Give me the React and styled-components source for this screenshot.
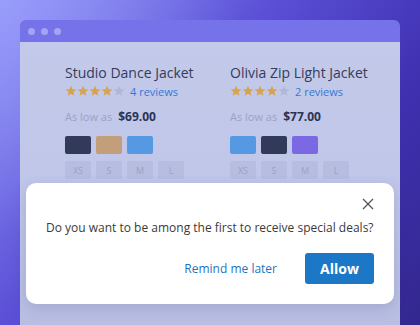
import React from 'react';
import styled, { createGlobalStyle } from 'styled-components';

const GlobalStyle = createGlobalStyle`
  html, body {
    margin: 0;
    padding: 0;
  }
  body {
    font-family: "Open Sans", "Liberation Sans", sans-serif;
  }
`;

const Stage = styled.div`
  position: relative;
  width: 420px;
  height: 325px;
  overflow: hidden;
  padding: 20px 20px 0;
  box-sizing: border-box;
  background:
    radial-gradient(circle at 0 0, rgba(160, 165, 255, 0.55), rgba(160, 165, 255, 0) 45%),
    linear-gradient(130deg, #8f92f6 0%, #5a4fd6 40%, #3f30b0 70%, #33278f 100%);
`;

const BrowserWindow = styled.div`
  height: 305px;
  border-radius: 6px 6px 0 0;
  overflow: hidden;
  display: flex;
  flex-direction: column;
`;

const TitleBar = styled.div`
  height: 22px;
  background: #7672e9;
  display: flex;
  align-items: center;
  gap: 6px;
  padding-left: 8px;
`;

const Dot = styled.span`
  width: 7px;
  height: 7px;
  border-radius: 50%;
  background: #a4a4f3;
`;

const Content = styled.div`
  flex: 1;
  background: linear-gradient(180deg, #c2c9e9 0%, #bfc6e8 60%, #b7bee2 100%);
  padding: 21px 0 0 45px;
  display: grid;
  grid-template-columns: 165px 165px;
  align-content: start;
`;

const Product = styled.div`
  display: flex;
  flex-direction: column;
`;

const Name = styled.div`
  font-size: 14px;
  line-height: 20px;
  color: #353b5c;
  white-space: nowrap;
`;

const RatingRow = styled.div`
  display: flex;
  align-items: center;
  height: 16px;
`;

const StarIcon = ({ on }) => (
  <svg width="12" height="12" viewBox="0 0 24 24">
    <path
      d="M12 1.5l3.1 7.1 7.6.6-5.8 5 1.8 7.5L12 17.7l-6.7 4 1.8-7.5-5.8-5 7.6-.6z"
      fill={on ? '#d9a24c' : '#b1b7d5'}
    />
  </svg>
);

const Reviews = styled.span`
  margin-left: 5px;
  font-size: 11px;
  color: #3479d6;
`;

const PriceRow = styled.div`
  display: flex;
  align-items: baseline;
  gap: 6px;
  margin-top: 9px;
  font-size: 11px;
  color: #9ca2c4;
`;

const Price = styled.span`
  font-weight: 700;
  font-size: 12px;
  color: #2d3352;
`;

const BoxRow = styled.div`
  display: flex;
  gap: 5px;
  margin-top: ${p => p.$top}px;
`;

const Swatch = styled.span`
  width: 26px;
  height: 18px;
  border-radius: 2px;
  background: ${p => p.$color};
`;

const Size = styled.span`
  width: 26px;
  height: 18px;
  border-radius: 2px;
  background: #b6bde0;
  color: #9ca2c4;
  font-size: 9px;
  display: flex;
  align-items: center;
  justify-content: center;
`;

const Prompt = styled.div`
  position: absolute;
  left: 26px;
  top: 183px;
  width: 368px;
  height: 121px;
  box-sizing: border-box;
  background: #fff;
  border-radius: 10px;
  box-shadow: 0 4px 14px rgba(60, 60, 120, 0.18);
  padding: 12px 20px 0 20px;
  display: flex;
  flex-direction: column;
`;

const CloseRow = styled.div`
  display: flex;
  justify-content: flex-end;
  height: 18px;
  align-items: center;
`;

const CloseButton = styled.button`
  border: none;
  background: none;
  padding: 0;
  width: 16px;
  height: 16px;
  margin-right: -2px;
  display: flex;
  align-items: center;
  justify-content: center;
`;

const Question = styled.p`
  margin: 6px 0 0;
  font-size: 12px;
  line-height: 18px;
  color: #3a3a3a;
  white-space: nowrap;
`;

const Actions = styled.div`
  display: flex;
  justify-content: flex-end;
  align-items: center;
  gap: 28px;
  margin-top: 16px;
`;

const LinkButton = styled.button`
  border: none;
  background: none;
  padding: 0;
  font-family: inherit;
  font-size: 12px;
  color: #1e74be;
`;

const PrimaryButton = styled.button`
  border: none;
  width: 69px;
  height: 31px;
  border-radius: 3px;
  background: #1c78c6;
  color: #fff;
  font-family: inherit;
  font-weight: 700;
  font-size: 14px;
`;

const products = [
  { name: 'Studio Dance Jacket', reviews: 4, price: '$69.00', colors: ['#323a59', '#c29e7a', '#5599e3'] },
  { name: 'Olivia Zip Light Jacket', reviews: 2, price: '$77.00', colors: ['#5599e3', '#323a59', '#7a69e2'] },
];

const sizes = ['XS', 'S', 'M', 'L'];

const App = () => {
  return (
    <>
      <GlobalStyle />
      <Stage>
        <BrowserWindow>
          <TitleBar>
            <Dot />
            <Dot />
            <Dot />
          </TitleBar>
          <Content>
            {products.map(product => (
              <Product key={product.name}>
                <Name>{product.name}</Name>
                <RatingRow>
                  {[0, 1, 2, 3, 4].map(i => (
                    <StarIcon key={i} on={i < 4} />
                  ))}
                  <Reviews>{product.reviews} reviews</Reviews>
                </RatingRow>
                <PriceRow>
                  As low as <Price>{product.price}</Price>
                </PriceRow>
                <BoxRow $top={11}>
                  {product.colors.map(c => (
                    <Swatch key={c} $color={c} />
                  ))}
                </BoxRow>
                <BoxRow $top={7}>
                  {sizes.map(s => (
                    <Size key={s}>{s}</Size>
                  ))}
                </BoxRow>
              </Product>
            ))}
          </Content>
        </BrowserWindow>

        <Prompt>
          <CloseRow>
            <CloseButton aria-label="Close">
              <svg width="12" height="12" viewBox="0 0 12 12">
                <path d="M1 1 L11 11 M11 1 L1 11" stroke="#555" strokeWidth="1.3" fill="none" />
              </svg>
            </CloseButton>
          </CloseRow>
          <Question>Do you want to be among the first to receive special deals?</Question>
          <Actions>
            <LinkButton>Remind me later</LinkButton>
            <PrimaryButton>Allow</PrimaryButton>
          </Actions>
        </Prompt>
      </Stage>
    </>
  );
};

export default App;
